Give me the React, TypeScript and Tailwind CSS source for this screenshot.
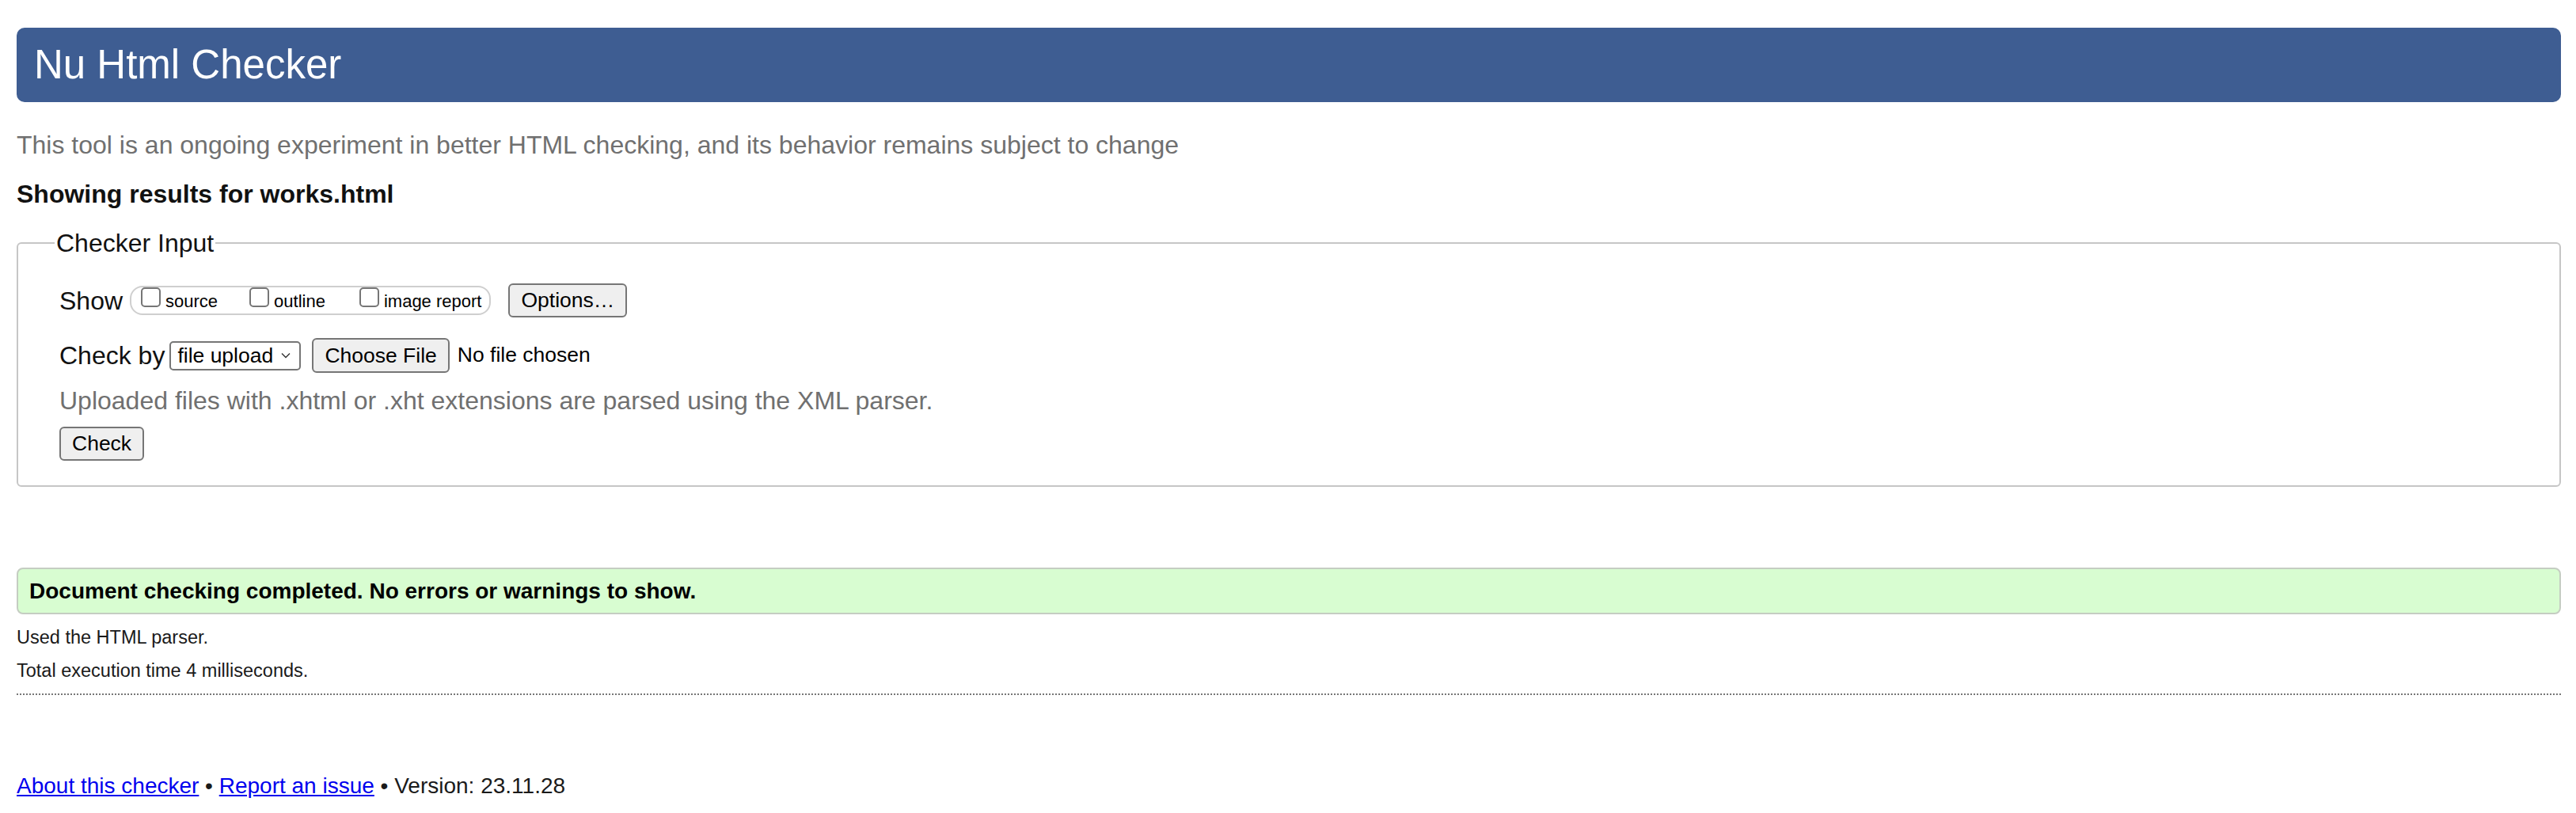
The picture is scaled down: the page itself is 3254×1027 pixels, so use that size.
import React from 'react';

const font = { fontFamily: '"Liberation Sans", Arial, Helvetica, sans-serif' };

const Checkbox: React.FC<{ label: string; className?: string }> = ({ label, className }) => {
  return (
    <label className={`whitespace-nowrap text-[22px] leading-none text-black ${className ?? ''}`}>
      <span className="inline-block w-[25px] h-[25px] mr-[6px] align-baseline border-2 border-[#767676] rounded-[5px] bg-white" />
      {label}
    </label>
  );
};

const Btn: React.FC<{ children: React.ReactNode; className?: string }> = ({ children, className }) => {
  return (
    <button
      type="button"
      className={`h-[43px] px-[14px] border-2 border-[#767676] bg-[#efefef] rounded-[6px] text-[26.5px] leading-none text-black ${className ?? ''}`}
    >
      {children}
    </button>
  );
};

export default function App() {
  return (
    <div className="min-h-screen bg-white pl-[21px] pr-[19px] pt-[35px] text-[#111]" style={font}>
      <h1 className="h-[94px] flex items-center pl-[22px] rounded-[10px] bg-[#3e5d92] text-white text-[51px] font-normal">
        Nu Html Checker
      </h1>

      <p className="mt-[35px] text-[32px] leading-[38px] text-[#707070]">
        This tool is an ongoing experiment in better HTML checking, and its behavior remains subject to change
      </p>

      <p className="mt-[24px] text-[32px] leading-[38px] font-bold text-[#111]">Showing results for works.html</p>

      <fieldset className="mt-[24px] border-2 border-[#c6c6c6] rounded-[6px]">
        <legend className="ml-[46px] px-[2px] text-[32px] leading-[38px] text-[#111]">Checker Input</legend>
        <div className="px-[52px] pt-[32px] pb-[31px]">
          <div className="flex items-center h-[43px]">
            <span className="text-[32px]">Show</span>
            <div className="ml-[9px] flex items-start h-[37px] border-2 border-[#cfcfcf] rounded-[16px] pl-[12px] pr-[10px]">
              <Checkbox label="source" />
              <Checkbox label="outline" className="ml-[40px]" />
              <Checkbox label="image report" className="ml-[43px]" />
            </div>
            <Btn className="ml-[22px]">Options…</Btn>
          </div>

          <div className="mt-[26px] flex items-center h-[44px]">
            <span className="text-[32px]">Check by</span>
            <div className="ml-[6px] w-[166px] h-[37px] flex items-center justify-between pl-[8px] pr-[11px] border-2 border-[#767676] rounded-[5px] bg-white">
              <span className="text-[26.5px] leading-none text-black">file upload</span>
              <svg width="12" height="8" viewBox="0 0 12 8" fill="none" stroke="#333" strokeWidth="1.4">
                <path d="M1 1.5l5 5 5-5" />
              </svg>
            </div>
            <Btn className="ml-[14px] h-[44px]">Choose File</Btn>
            <span className="ml-[10px] text-[26.5px] text-black">No file chosen</span>
          </div>

          <p className="mt-[16px] text-[32px] leading-[38px] text-[#707070]">
            Uploaded files with .xhtml or .xht extensions are parsed using the XML parser.
          </p>

          <Btn className="mt-[14px]">Check</Btn>
        </div>
      </fieldset>

      <div className="mt-[102px] h-[59px] flex items-center pl-[14px] border-2 border-[#c5cdc2] rounded-[8px] bg-[#d8fdd1]">
        <span className="text-[28px] font-bold text-black">Document checking completed. No errors or warnings to show.</span>
      </div>

      <p className="mt-[15px] text-[23.5px] leading-[28px] text-[#1a1a1a]">Used the HTML parser.</p>
      <p className="mt-[14px] text-[23.5px] leading-[28px] text-[#1a1a1a]">Total execution time 4 milliseconds.</p>

      <hr className="mt-[15px] border-0 border-t-2 border-dotted border-[#777]" />

      <p className="mt-[99px] text-[28px] leading-[32px] text-[#1a1a1a]">
        <a href="#" className="text-[#0000ee] underline">About this checker</a>
        {' • '}
        <a href="#" className="text-[#0000ee] underline">Report an issue</a>
        {' • Version: 23.11.28'}
      </p>
    </div>
  );
}
